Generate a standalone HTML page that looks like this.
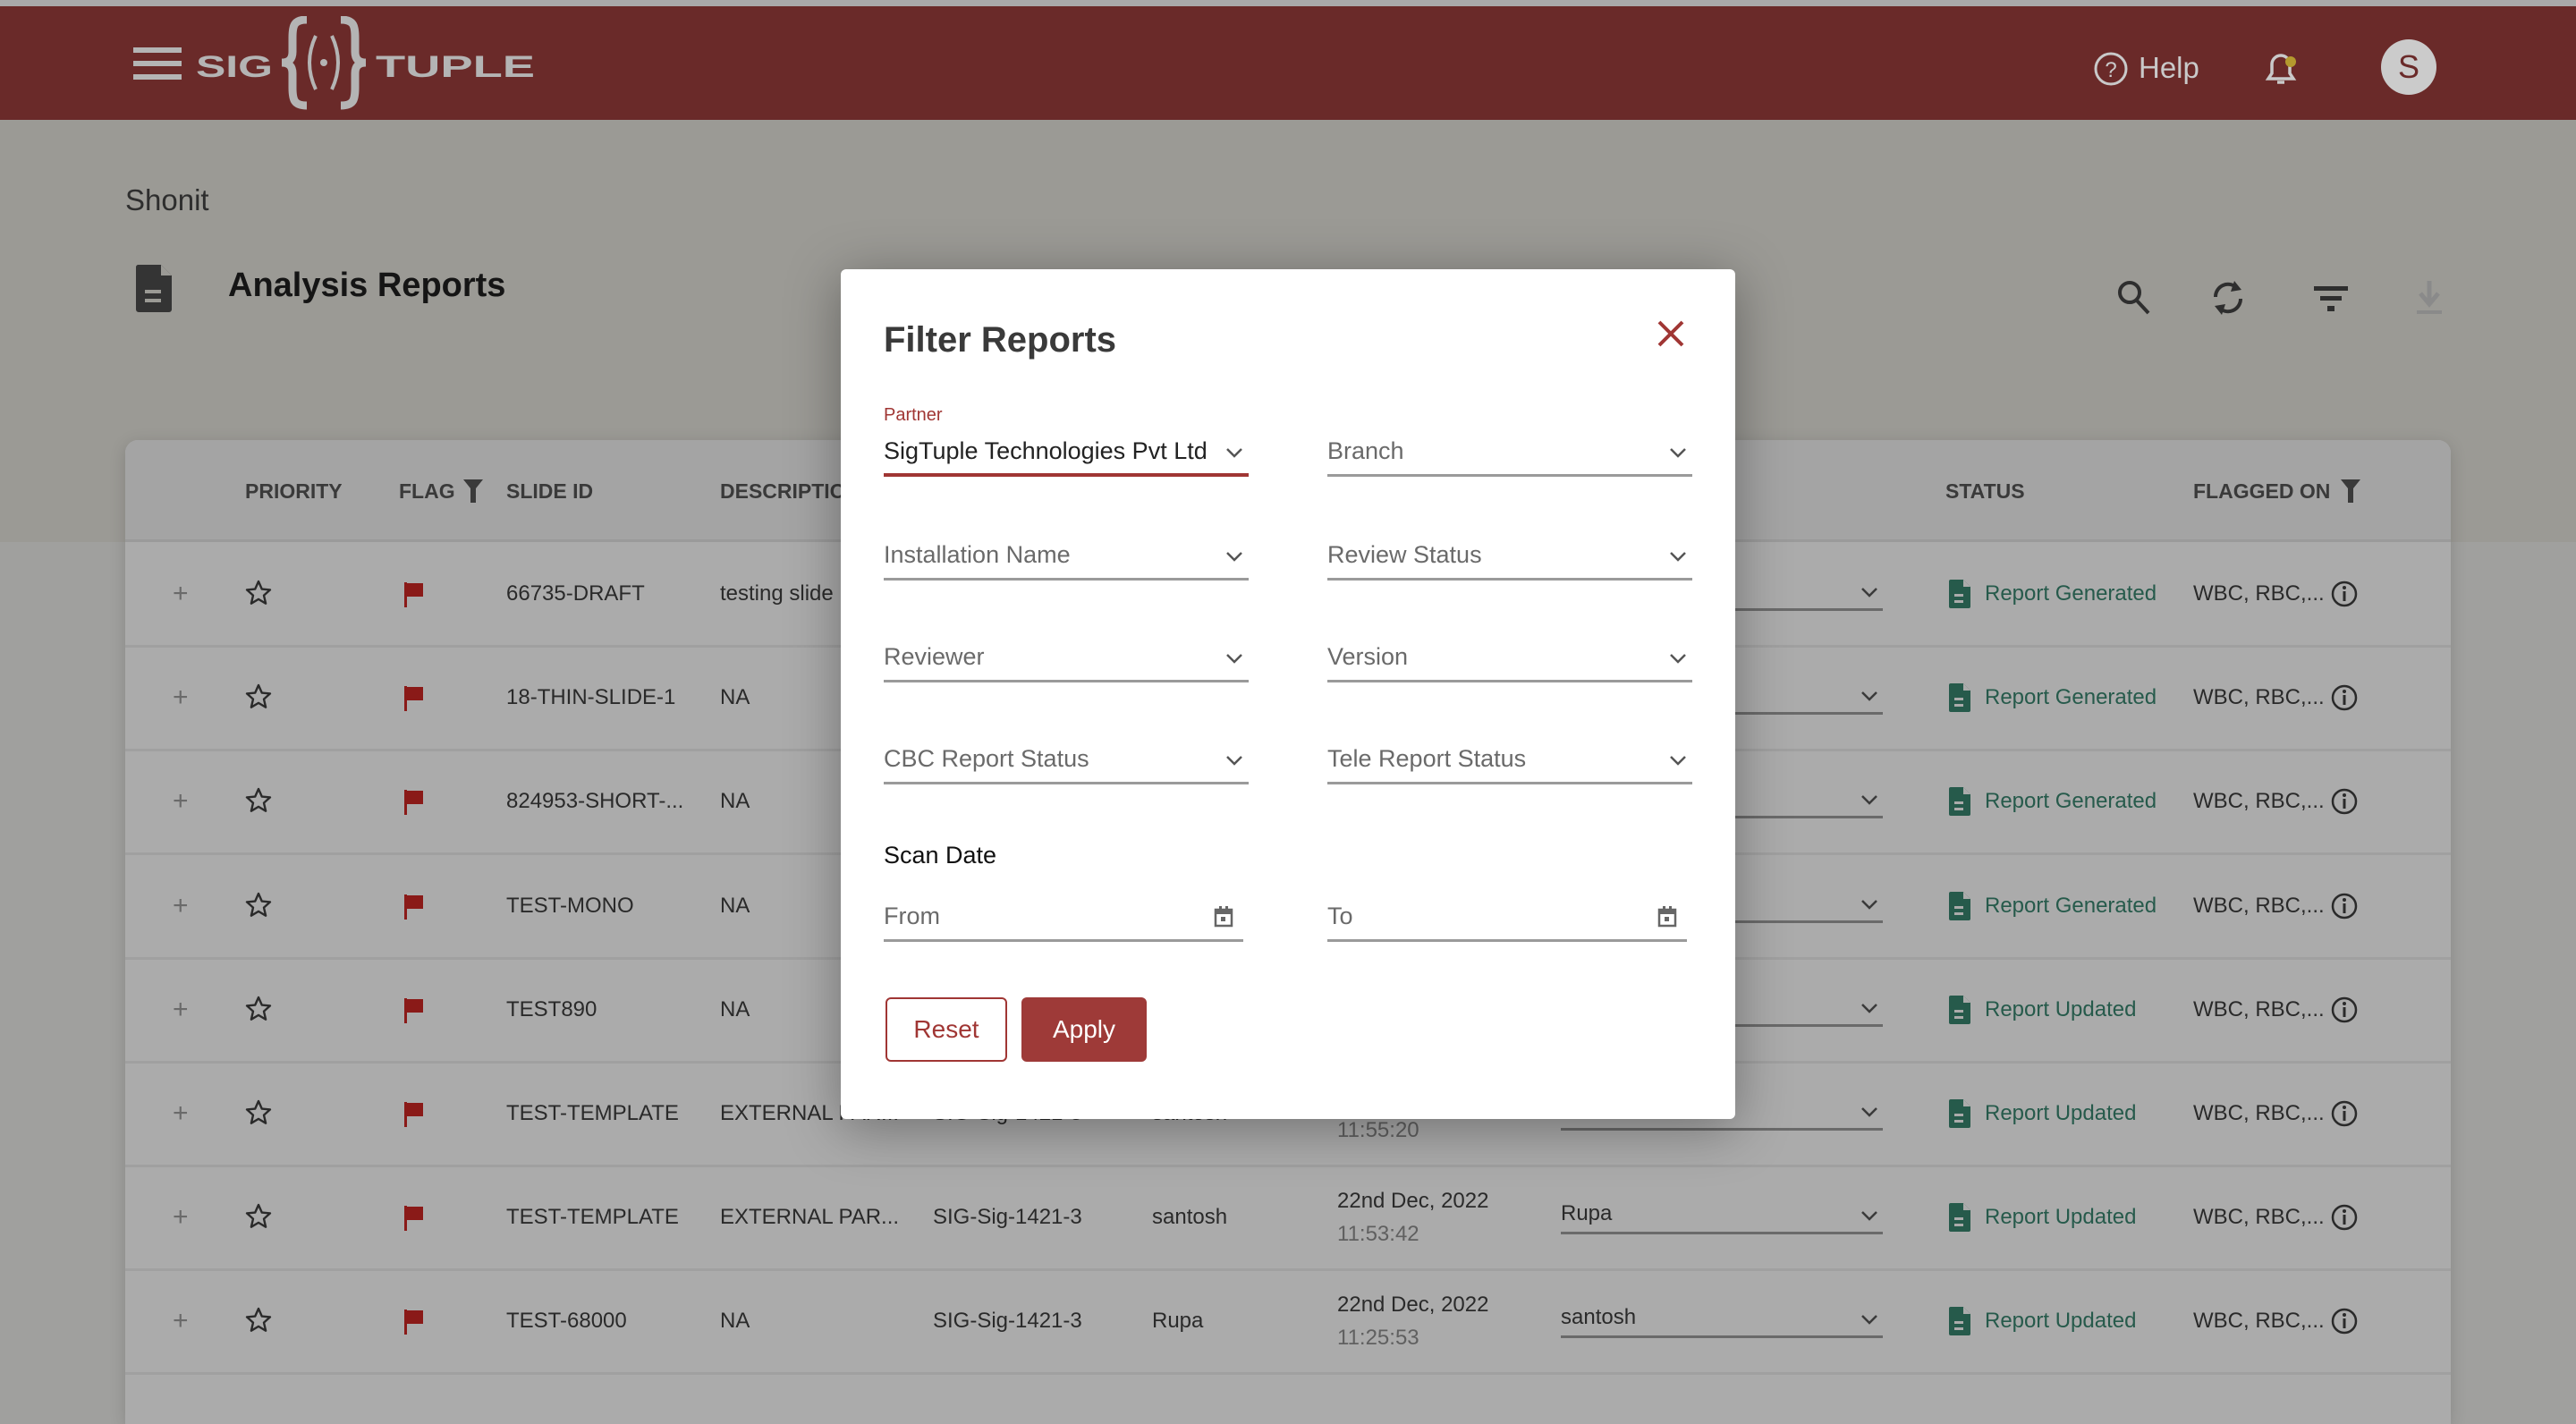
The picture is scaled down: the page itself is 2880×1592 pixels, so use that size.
<!DOCTYPE html>
<html><head><meta charset="utf-8"><style>
*{margin:0;padding:0;box-sizing:border-box}
body{width:2880px;height:1552px;overflow:hidden;position:relative;background:#a0a09e;font-family:"Liberation Sans",sans-serif}
.a{position:absolute;white-space:nowrap}
.top{left:0;top:0;width:2880px;height:606px;background:#9b9a95}
.hdr{left:0;top:7px;width:2880px;height:127px;background:#6a2a29}
.card{left:140px;top:492px;width:2600px;height:1100px;background:#ababab;border-radius:14px 14px 0 0;box-shadow:0 4px 18px rgba(0,0,0,.15)}
.thead{left:140px;top:492px;width:2600px;height:114px;background:#a4a4a4;border-radius:14px 14px 0 0;border-bottom:3px solid #9a9a9a}
.th{font-size:23px;font-weight:bold;color:#3a3a3a;top:536px}
.td{font-size:24px;color:#2a2a2a}
.line{height:3px;background:#a0a0a0;left:140px;width:2600px}
.green{color:#265a4b;font-size:24px}
.modal{left:940px;top:301px;width:1000px;height:950px;background:#fff;border-radius:6px;box-shadow:0 10px 60px rgba(0,0,0,.35)}
.fl{font-size:27px;color:#6a6a6a}
.ul{height:3px;background:#9a9a9a}
</style></head><body>
<div class="a top"></div>
<div class="a" style="left:0;top:0;width:2880px;height:7px;background:#a9a9a9"></div>
<div class="a hdr"></div>
<!-- hamburger -->
<div class="a" style="left:149px;top:53px;width:54px;height:6px;background:#b4b4b4"></div>
<div class="a" style="left:149px;top:68px;width:54px;height:6px;background:#b4b4b4"></div>
<div class="a" style="left:149px;top:83px;width:54px;height:6px;background:#b4b4b4"></div>
<svg class="a" style="left:215px;top:18px" width="390" height="110" viewBox="0 0 390 110">
<text x="4" y="68" font-size="34" font-weight="bold" fill="#b4b4b4" font-family="Liberation Sans" textLength="86" lengthAdjust="spacingAndGlyphs">SIG</text>
<path d="M128 4c-14 0-16 6-16 20v16c0 8-4 12-12 12 8 0 12 4 12 12v16c0 14 2 20 16 20" fill="none" stroke="#b4b4b4" stroke-width="9"/>
<path d="M166 4c14 0 16 6 16 20v16c0 8 4 12 12 12-8 0-12 4-12 12v16c0 14-2 20-16 20" fill="none" stroke="#b4b4b4" stroke-width="9"/>
<path d="M138 22q-14 30 0 60M156 22q14 30 0 60" fill="none" stroke="#b4b4b4" stroke-width="4"/>
<circle cx="147" cy="52" r="4" fill="#b4b4b4"/>
<text x="205" y="68" font-size="34" font-weight="bold" fill="#b4b4b4" font-family="Liberation Sans" textLength="178" lengthAdjust="spacingAndGlyphs">TUPLE</text>
</svg>
<svg class="a" style="left:2340px;top:57px" width="40" height="40" viewBox="0 0 40 40"><circle cx="20" cy="20" r="17" fill="none" stroke="#c9c9c9" stroke-width="3"/><text x="20" y="29" font-size="24" fill="#c9c9c9" text-anchor="middle" font-family="Liberation Sans">?</text></svg>
<div class="a" style="left:2391px;top:57px;font-size:33px;color:#c9c9c9">Help</div>
<svg class="a" style="left:2528px;top:52px" width="44" height="48" viewBox="0 0 44 48"><path d="M8 36h28l-4-6V20a10 10 0 0 0-20 0v10z" fill="none" stroke="#c9c9c9" stroke-width="3.5"/><path d="M18 40h8" stroke="#c9c9c9" stroke-width="3.5"/><circle cx="33" cy="17" r="6" fill="#b49a2e"/></svg>
<div class="a" style="left:2662px;top:44px;width:62px;height:62px;border-radius:50%;background:#cbcbcb;color:#6a2a29;font-size:36px;text-align:center;line-height:62px">S</div>

<div class="a" style="left:140px;top:205px;font-size:33px;color:#2e2e2e">Shonit</div>
<svg class="a" style="left:150px;top:294px" width="44" height="56" viewBox="0 0 44 56"><path d="M4 2h26l12 12v38a3 3 0 0 1-3 3H5a3 3 0 0 1-3-3V5a3 3 0 0 1 2-3z" fill="#343434"/><path d="M30 2v12h12" fill="#9b9a95"/><rect x="12" y="30" width="18" height="4" fill="#9b9a95"/><rect x="12" y="40" width="18" height="4" fill="#9b9a95"/></svg>
<div class="a" style="left:255px;top:298px;font-size:38px;font-weight:bold;color:#151515">Analysis Reports</div>
<svg class="a" style="left:2366px;top:312px" width="40" height="44" viewBox="0 0 40 44"><circle cx="15" cy="15" r="11" fill="none" stroke="#2e2e2e" stroke-width="4"/><path d="M23 24l13 14" stroke="#2e2e2e" stroke-width="4"/></svg>
<svg class="a" style="left:2468px;top:310px" width="46" height="46" viewBox="0 0 46 46"><path d="M9 22a14 14 0 0 1 24-10" fill="none" stroke="#2e2e2e" stroke-width="4"/><path d="M37 24a14 14 0 0 1-24 10" fill="none" stroke="#2e2e2e" stroke-width="4"/><path d="M30 4l8 10-12 2z M16 42l-8-10 12-2z" fill="#2e2e2e"/></svg>
<div class="a" style="left:2587px;top:320px;width:38px;height:5px;background:#2e2e2e"></div>
<div class="a" style="left:2594px;top:331px;width:24px;height:5px;background:#2e2e2e"></div>
<div class="a" style="left:2602px;top:342px;width:8px;height:6px;background:#2e2e2e"></div>
<svg class="a" style="left:2700px;top:314px" width="32" height="40" viewBox="0 0 32 40"><path d="M16 0v22M6 14l10 12 10-12" fill="none" stroke="#8a8a8a" stroke-width="5"/><rect x="2" y="33" width="28" height="4" fill="#8a8a8a"/></svg>

<div class="a card"></div>
<div class="a thead"></div>
<div class="a th" style="left:274px">PRIORITY</div>
<div class="a th" style="left:446px">FLAG</div>
<svg class="a" style="left:518px;top:536px" width="22" height="26" viewBox="0 0 22 26"><path d="M0 0h22l-8 10v16h-6V10z" fill="#3a3a3a"/></svg>
<div class="a th" style="left:566px">SLIDE ID</div>
<div class="a th" style="left:805px">DESCRIPTION</div>
<div class="a th" style="left:2175px">STATUS</div>
<div class="a th" style="left:2452px">FLAGGED ON</div>
<svg class="a" style="left:2617px;top:536px" width="22" height="26" viewBox="0 0 22 26"><path d="M0 0h22l-8 10v16h-6V10z" fill="#3a3a3a"/></svg>

<div id="rows"></div>
<script>
var rows=[
["66735-DRAFT","testing slide","","","","","","Report Generated"],
["18-THIN-SLIDE-1","NA","","","","","","Report Generated"],
["824953-SHORT-...","NA","","","","","","Report Generated"],
["TEST-MONO","NA","","","","","","Report Generated"],
["TEST890","NA","","","","","","Report Updated"],
["TEST-TEMPLATE","EXTERNAL PAR...","SIG-Sig-1421-3","santosh","22nd Dec, 2022","11:55:20","","Report Updated"],
["TEST-TEMPLATE","EXTERNAL PAR...","SIG-Sig-1421-3","santosh","22nd Dec, 2022","11:53:42","Rupa","Report Updated"],
["TEST-68000","NA","SIG-Sig-1421-3","Rupa","22nd Dec, 2022","11:25:53","santosh","Report Updated"]];
var h="";
for(var i=0;i<rows.length;i++){var c=664+i*116.2,r=rows[i],t=c-14;
h+='<div class="a line" style="top:'+(c+57)+'px"></div>';
h+='<div class="a" style="left:193px;top:'+(c-12)+'px;font-size:30px;color:#6a6a6a;line-height:24px">+</div>';
h+='<svg class="a" style="left:274px;top:'+(c-16)+'px" width="30" height="30" viewBox="0 0 30 30"><path d="M15 2l3.8 8.6 9.2.8-7 6.2 2.1 9.1L15 21.9 6.9 26.7 9 17.6 2 11.4l9.2-.8z" fill="none" stroke="#2a2a2a" stroke-width="2.4" stroke-linejoin="round"/></svg>';
h+='<svg class="a" style="left:452px;top:'+(c-13)+'px" width="24" height="28" viewBox="0 0 24 28"><rect x="0" y="0" width="3" height="28" fill="#8a1a18"/><path d="M3 1h18v15H3z" fill="#8a1a18"/></svg>';
h+='<div class="a td" style="left:566px;top:'+t+'px">'+r[0]+'</div>';
h+='<div class="a td" style="left:805px;top:'+t+'px">'+r[1]+'</div>';
h+='<div class="a td" style="left:1043px;top:'+t+'px">'+r[2]+'</div>';
h+='<div class="a td" style="left:1288px;top:'+t+'px">'+r[3]+'</div>';
if(r[4]){h+='<div class="a td" style="left:1495px;top:'+(c-32)+'px">'+r[4]+'</div><div class="a td" style="left:1495px;top:'+(c+5)+'px;color:#606060">'+r[5]+'</div>';}
h+='<div class="a td" style="left:1745px;top:'+(c-18)+'px">'+r[6]+'</div>';
h+='<div class="a" style="left:1745px;top:'+(c+16)+'px;width:360px;height:3px;background:#6a6a6a"></div>';
h+='<svg class="a" style="left:2080px;top:'+(c-8)+'px" width="20" height="12" viewBox="0 0 20 12"><path d="M2 2l8 8 8-8" fill="none" stroke="#3a3a3a" stroke-width="2.5"/></svg>';
h+='<svg class="a" style="left:2179px;top:'+(c-16)+'px" width="24" height="32" viewBox="0 0 24 32"><path d="M2 0h14l8 8v22a2 2 0 0 1-2 2H2a2 2 0 0 1-2-2V2a2 2 0 0 1 2-2z" fill="#265a4b"/><path d="M16 0v8h8" fill="#ababab"/><rect x="6" y="16" width="10" height="3" fill="#ababab"/><rect x="6" y="23" width="10" height="3" fill="#ababab"/></svg>';
h+='<div class="a green" style="left:2219px;top:'+t+'px">'+r[7]+'</div>';
h+='<div class="a td" style="left:2452px;top:'+t+'px">WBC, RBC,...</div>';
h+='<svg class="a" style="left:2606px;top:'+(c-15)+'px" width="30" height="30" viewBox="0 0 30 30"><circle cx="15" cy="15" r="13" fill="none" stroke="#2a2a2a" stroke-width="2.5"/><rect x="13.5" y="12" width="3" height="11" fill="#2a2a2a"/><circle cx="15" cy="8" r="2" fill="#2a2a2a"/></svg>';
}
document.getElementById("rows").innerHTML=h;
</script>

<div class="a modal"></div>
<div class="a" style="left:988px;top:358px;font-size:40px;font-weight:bold;color:#3a3a3a">Filter Reports</div>
<svg class="a" style="left:1852px;top:357px" width="32" height="32" viewBox="0 0 32 32"><path d="M3 3l26 26M29 3L3 29" stroke="#a03634" stroke-width="4"/></svg>

<div class="a" style="left:988px;top:453px;font-size:20px;color:#a03634">Partner</div>
<div class="a" style="left:988px;top:489px;font-size:27px;color:#222">SigTuple Technologies Pvt Ltd</div>
<div class="a" style="left:988px;top:529px;width:408px;height:4px;background:#a03634"></div>

<div id="fields"></div>
<script>
var f=[["Branch",1484,505,1],["Installation Name",988,621,0],["Review Status",1484,621,0],["Reviewer",988,735,0],["Version",1484,735,0],["CBC Report Status",988,849,0],["Tele Report Status",1484,849,0]];
var g="<svg class='a' style='left:1370px;top:500px' width='20' height='12' viewBox='0 0 20 12'><path d='M2 2l8 8 8-8' fill='none' stroke='#555' stroke-width='2.5'/></svg>";
for(var i=0;i<f.length;i++){var x=f[i][1],y=f[i][2];
g+='<div class="a fl" style="left:'+x+'px;top:'+(y-16)+'px">'+f[i][0]+'</div>';
g+='<div class="a ul" style="left:'+x+'px;top:'+(y+25)+'px;width:408px"></div>';
g+="<svg class='a' style='left:"+(x+382)+"px;top:"+(y-5)+"px' width='20' height='12' viewBox='0 0 20 12'><path d='M2 2l8 8 8-8' fill='none' stroke='#555' stroke-width='2.5'/></svg>";}
document.getElementById("fields").innerHTML=g;
</script>

<div class="a" style="left:988px;top:941px;font-size:27px;color:#111">Scan Date</div>
<div class="a fl" style="left:988px;top:1009px">From</div>
<div class="a ul" style="left:988px;top:1050px;width:402px"></div>
<div class="a fl" style="left:1484px;top:1009px">To</div>
<div class="a ul" style="left:1484px;top:1050px;width:402px"></div>
<svg class="a" style="left:1357px;top:1013px" width="22" height="24" viewBox="0 0 22 24"><rect x="2" y="4" width="18" height="18" fill="none" stroke="#666" stroke-width="2.5"/><rect x="2" y="4" width="18" height="5" fill="#666"/><rect x="6" y="0" width="3" height="5" fill="#666"/><rect x="13" y="0" width="3" height="5" fill="#666"/><rect x="8" y="12" width="5" height="5" fill="#666"/></svg>
<svg class="a" style="left:1853px;top:1013px" width="22" height="24" viewBox="0 0 22 24"><rect x="2" y="4" width="18" height="18" fill="none" stroke="#666" stroke-width="2.5"/><rect x="2" y="4" width="18" height="5" fill="#666"/><rect x="6" y="0" width="3" height="5" fill="#666"/><rect x="13" y="0" width="3" height="5" fill="#666"/><rect x="8" y="12" width="5" height="5" fill="#666"/></svg>

<div class="a" style="left:990px;top:1115px;width:136px;height:72px;border:2px solid #a03634;border-radius:6px;color:#a03634;font-size:28px;text-align:center;line-height:68px">Reset</div>
<div class="a" style="left:1142px;top:1115px;width:140px;height:72px;background:#9e3a38;border-radius:6px;color:#fff;font-size:28px;text-align:center;line-height:72px">Apply</div>
</body></html>
